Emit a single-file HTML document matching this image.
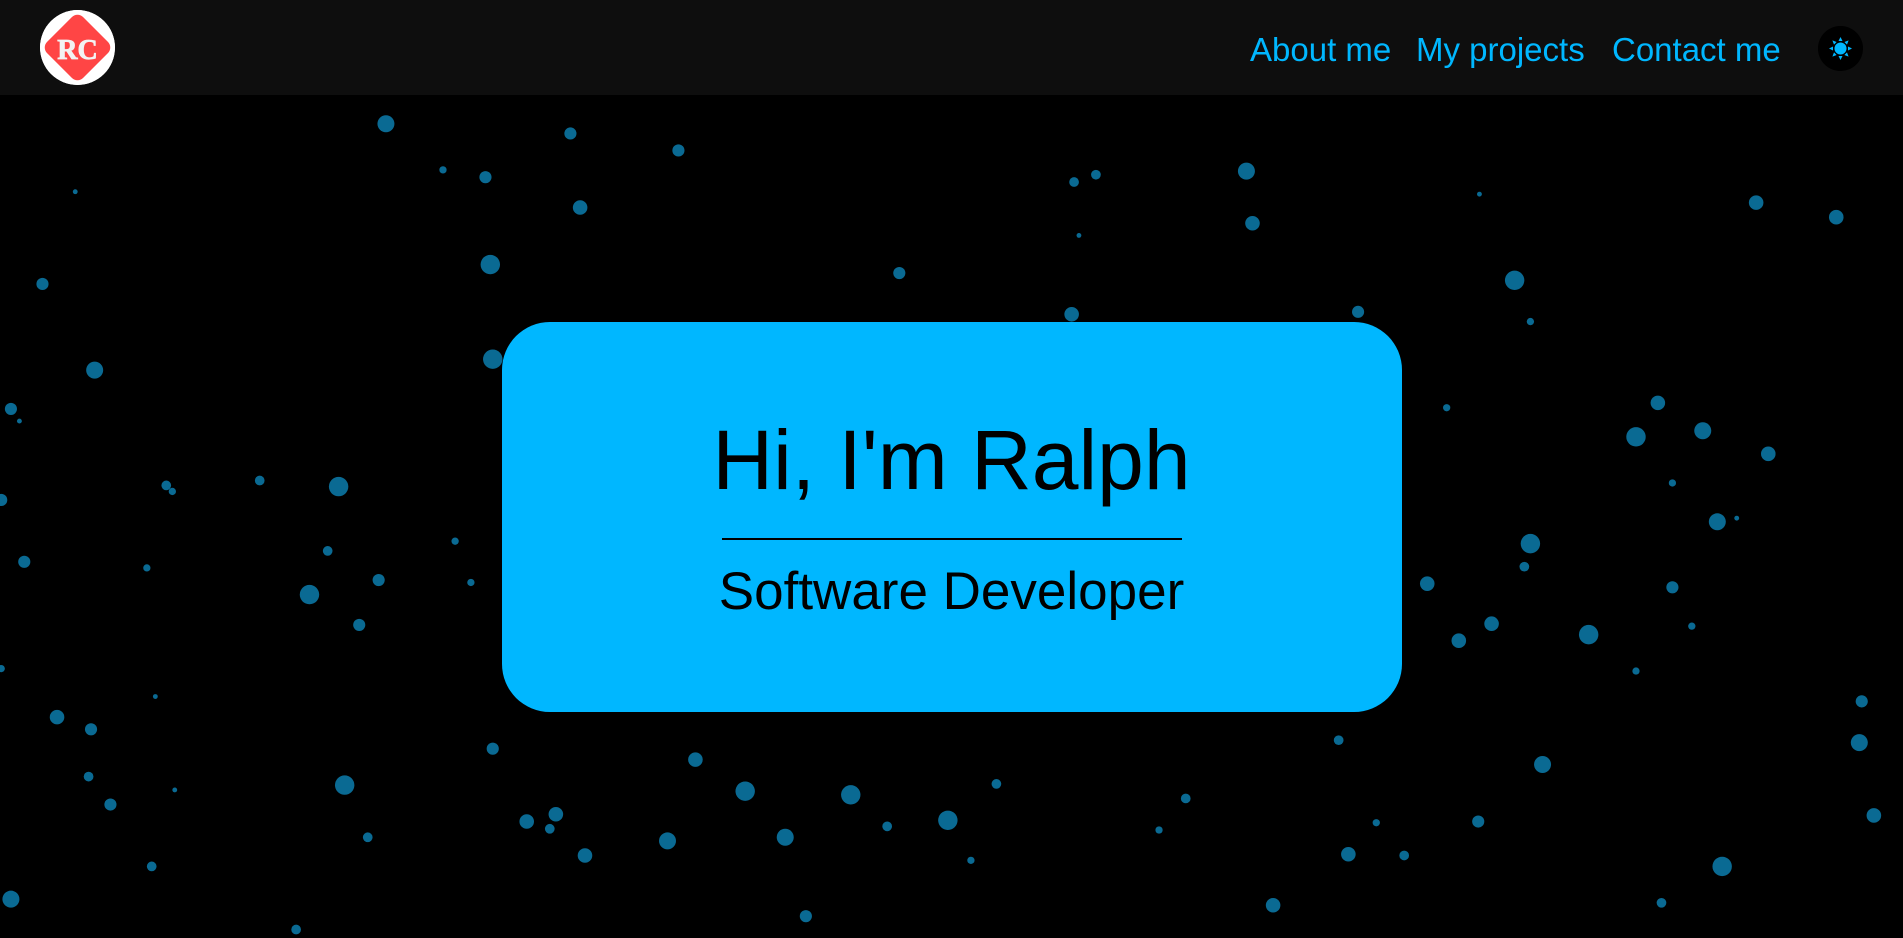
<!DOCTYPE html>
<html><head><meta charset="utf-8"><style>
html,body{margin:0;padding:0;width:1903px;height:938px;overflow:hidden;background:#000;font-family:"Liberation Sans",sans-serif;}
.bg{position:absolute;left:0;top:0;width:1903px;height:938px;}
nav{position:absolute;left:0;top:0;width:1903px;height:95px;background:#0e0e0e;}
.logo{position:absolute;left:40px;top:10px;width:75px;height:75px;border-radius:50%;background:#fff;}
.lk{position:absolute;top:30px;font-size:33px;line-height:40px;color:#00b7ff;white-space:nowrap;}
.theme{position:absolute;left:1818px;top:26px;width:45px;height:45px;border-radius:50%;background:#000;}
.card{position:absolute;left:502px;top:322px;width:900px;height:390px;background:#00b7ff;border-radius:48px;text-align:center;}
h1{margin:0;position:absolute;top:410px;left:0;width:1903px;text-align:center;font-weight:normal;font-size:84px;line-height:100px;color:#000;}
.line{position:absolute;left:722px;top:538px;width:460px;height:2px;background:#000;}
.sub{position:absolute;top:562px;left:0;width:1903px;text-align:center;font-size:53px;line-height:60px;color:#000;}
</style></head><body>
<svg class="bg" viewBox="0 0 1568 773" preserveAspectRatio="none"><g fill="#0a6a93">
<circle cx="318" cy="102" r="7"/><circle cx="470" cy="110" r="5"/><circle cx="559" cy="124" r="5"/><circle cx="365" cy="140" r="3"/><circle cx="400" cy="146" r="5"/><circle cx="62" cy="158" r="2"/><circle cx="478" cy="171" r="6"/><circle cx="404" cy="218" r="8"/><circle cx="35" cy="234" r="5"/><circle cx="741" cy="225" r="5"/><circle cx="1027" cy="141" r="7"/><circle cx="885" cy="150" r="4"/><circle cx="903" cy="144" r="4"/><circle cx="1032" cy="184" r="6"/><circle cx="889" cy="194" r="2"/><circle cx="1447" cy="167" r="6"/><circle cx="1513" cy="179" r="6"/><circle cx="1219" cy="160" r="2"/><circle cx="1248" cy="231" r="8"/><circle cx="1261" cy="265" r="3"/><circle cx="883" cy="259" r="6"/><circle cx="1119" cy="257" r="5"/><circle cx="406" cy="296" r="8"/><circle cx="78" cy="305" r="7"/><circle cx="9" cy="337" r="5"/><circle cx="16" cy="347" r="2"/><circle cx="1366" cy="332" r="6"/><circle cx="1403" cy="355" r="7"/><circle cx="1348" cy="360" r="8"/><circle cx="1457" cy="374" r="6"/><circle cx="1192" cy="336" r="3"/><circle cx="279" cy="401" r="8"/><circle cx="214" cy="396" r="4"/><circle cx="137" cy="400" r="4"/><circle cx="142" cy="405" r="3"/><circle cx="1378" cy="398" r="3"/><circle cx="1415" cy="430" r="7"/><circle cx="1431" cy="427" r="2"/><circle cx="1261" cy="448" r="8"/><circle cx="1256" cy="467" r="4"/><circle cx="20" cy="463" r="5"/><circle cx="121" cy="468" r="3"/><circle cx="270" cy="454" r="4"/><circle cx="375" cy="446" r="3"/><circle cx="312" cy="478" r="5"/><circle cx="255" cy="490" r="8"/><circle cx="388" cy="480" r="3"/><circle cx="296" cy="515" r="5"/><circle cx="1176" cy="481" r="6"/><circle cx="1378" cy="484" r="5"/><circle cx="1229" cy="514" r="6"/><circle cx="1202" cy="528" r="6"/><circle cx="1309" cy="523" r="8"/><circle cx="1394" cy="516" r="3"/><circle cx="1348" cy="553" r="3"/><circle cx="1534" cy="578" r="5"/><circle cx="1532" cy="612" r="7"/><circle cx="47" cy="591" r="6"/><circle cx="75" cy="601" r="5"/><circle cx="128" cy="574" r="2"/><circle cx="406" cy="617" r="5"/><circle cx="573" cy="626" r="6"/><circle cx="1103" cy="610" r="4"/><circle cx="1271" cy="630" r="7"/><circle cx="73" cy="640" r="4"/><circle cx="284" cy="647" r="8"/><circle cx="614" cy="652" r="8"/><circle cx="701" cy="655" r="8"/><circle cx="821" cy="646" r="4"/><circle cx="91" cy="663" r="5"/><circle cx="144" cy="651" r="2"/><circle cx="977" cy="658" r="4"/><circle cx="1544" cy="672" r="6"/><circle cx="458" cy="671" r="6"/><circle cx="434" cy="677" r="6"/><circle cx="453" cy="683" r="4"/><circle cx="781" cy="676" r="8"/><circle cx="731" cy="681" r="4"/><circle cx="1218" cy="677" r="5"/><circle cx="1134" cy="678" r="3"/><circle cx="647" cy="690" r="7"/><circle cx="550" cy="693" r="7"/><circle cx="303" cy="690" r="4"/><circle cx="482" cy="705" r="6"/><circle cx="1111" cy="704" r="6"/><circle cx="1157" cy="705" r="4"/><circle cx="800" cy="709" r="3"/><circle cx="1419" cy="714" r="8"/><circle cx="125" cy="714" r="4"/><circle cx="9" cy="741" r="7"/><circle cx="1049" cy="746" r="6"/><circle cx="1369" cy="744" r="4"/><circle cx="664" cy="755" r="5"/><circle cx="244" cy="766" r="4"/><circle cx="1" cy="412" r="5"/><circle cx="955" cy="684" r="3"/><circle cx="1" cy="551" r="3"/></g></svg>
<nav>
<svg class="logo" viewBox="0 0 75 75"><circle cx="37.5" cy="37.5" r="37.5" fill="#fff"/><rect x="12" y="12" width="51" height="51" rx="8" fill="#ff4545" transform="rotate(45 37.5 37.5)"/><text x="37.5" y="49" text-anchor="middle" font-family="Liberation Serif,serif" font-weight="bold" font-size="28" fill="#f2f2f2" stroke="#f2f2f2" stroke-width="0.8">RC</text></svg>
<div class="lk" style="left:1250px">About me</div>
<div class="lk" style="left:1416px">My projects</div>
<div class="lk" style="left:1612px">Contact me</div>
<svg class="theme" viewBox="0 0 45 45"><circle cx="22.5" cy="22.5" r="22.5" fill="#000"/><g fill="#00b7ff"><circle cx="22.5" cy="22.5" r="6"/><polygon points="22.5,11 24.5,15 20.5,15"/><polygon points="22.5,34 24.5,30 20.5,30"/><polygon points="11,22.5 15,20.5 15,24.5"/><polygon points="34,22.5 30,20.5 30,24.5"/><polygon points="14.4,14.4 18.6,16 16,18.6"/><polygon points="30.6,30.6 26.4,29 29,26.4"/><polygon points="30.6,14.4 29,18.6 26.4,16"/><polygon points="14.4,30.6 16,26.4 18.6,29"/></g></svg>
</nav>
<div class="card"></div>
<h1>Hi, I'm Ralph</h1>
<div class="line"></div>
<div class="sub">Software Developer</div>
</body></html>
